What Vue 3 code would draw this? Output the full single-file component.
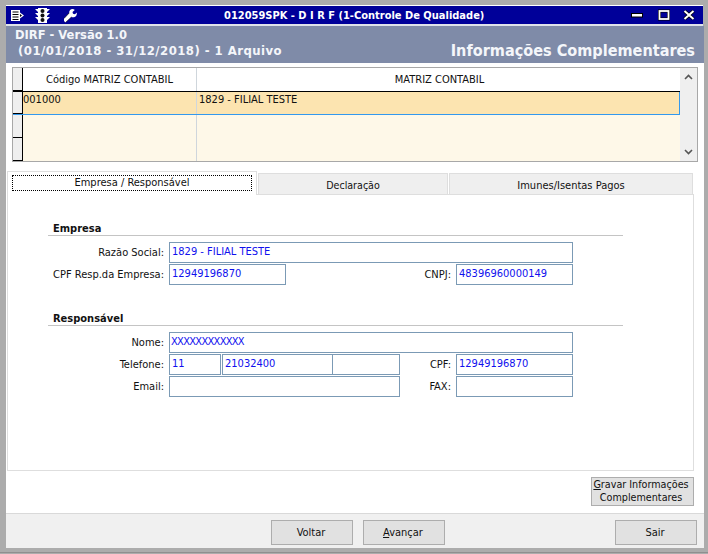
<script setup>
const rows = [
  { id: 1, code: '001000', name: '1829 - FILIAL TESTE', selected: true },
  { id: 2, code: '', name: '', selected: false },
  { id: 3, code: '', name: '', selected: false },
]
</script>

<template>
  <div class="window">
    <div class="titlebar">
      <div class="tools">
        <svg width="13" height="11" viewBox="0 0 13 11"><path d="M0 0h9v2.500l4 3-4 3V11H0z" fill="#fff"/><path d="M1.500 2h6M1.500 4.500h6M1.500 7h6M1.500 9.500h6" stroke="#000" stroke-width="1"/><path d="M9 4v3l2-1.500z" fill="#000"/></svg>
        <svg width="15" height="15" viewBox="0 0 15 15"><path d="M0 1h3V0h9v1h3l-3 3v1h3l-3 3v1h3l-3 3v3H3v-3L0 9h3V8L0 5h3V4z" fill="#fff"/><circle cx="7.500" cy="3" r="2" fill="#111"/><circle cx="7.500" cy="7.500" r="2" fill="#111"/><circle cx="7.500" cy="12" r="2" fill="#111"/></svg>
        <svg class="wrench" width="15" height="15" viewBox="0 0 15 15"><path d="M1 13l1.500 1.500 6-5.500c2 .6 4 .1 5-1.800l.6-2.700-2.300 1.800-1.800-.5-.5-1.800L11.800 2C9.500 0 6 1.500 6.200 5L1 10.500z" fill="#fff"/><path d="M1 10.500L6.200 5M2.500 14.500l6-5.500" stroke="#000" stroke-width=".6"/></svg>
      </div>
      <div class="title">012059SPK - D I R F (1-Controle De Qualidade)</div>
      <div class="controls">
        <svg width="12" height="12" viewBox="0 0 12 12"><rect x=".5" y="4.500" width="11" height="3.500" fill="#fff" stroke="#000"/></svg>
        <svg class="ctl-max" width="12" height="12" viewBox="0 0 12 12"><rect x="1.500" y="2" width="9" height="8" fill="none" stroke="#000" stroke-width="3"/><rect x="1.500" y="2" width="9" height="8" fill="none" stroke="#fff" stroke-width="1.800"/></svg>
        <svg class="ctl-close" width="12" height="12" viewBox="0 0 12 12"><path d="M1.500 2l9 8M10.500 2l-9 8" stroke="#000" stroke-width="3.400"/><path d="M1.500 2l9 8M10.500 2l-9 8" stroke="#fff" stroke-width="2"/></svg>
      </div>
    </div>
    <div class="header">
      <div class="info">
        <div class="h-line">DIRF - Versão 1.0</div>
        <div class="h-line second">(01/01/2018 - 31/12/2018) - 1 Arquivo</div>
      </div>
      <div class="page-title">Informações Complementares</div>
    </div>

    <div class="main">
      <div class="grid">
        <div class="grid-body">
          <div class="grid-row head">
            <div class="ind"></div>
            <div class="cell c1 center">Código MATRIZ CONTABIL</div>
            <div class="cell c2 center">MATRIZ CONTABIL</div>
          </div>
          <div v-for="r in rows" :key="r.id" class="grid-row" :class="{ selected: r.selected }">
            <div class="ind"></div>
            <div class="cell c1">{{ r.code }}</div>
            <div class="cell c2">{{ r.name }}</div>
          </div>
        </div>
        <div class="scroll">
          <svg width="9" height="6" viewBox="0 0 9 6"><path d="M1 5l3.500-3.500L8 5" fill="none" stroke="#555" stroke-width="1.600"/></svg>
          <svg width="9" height="6" viewBox="0 0 9 6"><path d="M1 1l3.500 3.500L8 1" fill="none" stroke="#555" stroke-width="1.600"/></svg>
        </div>
      </div>

      <div class="tabs">
        <div class="tab active"><span class="focus">Empresa / Responsável</span></div>
        <div class="tab t2">Declaração</div>
        <div class="tab t3">Imunes/Isentas Pagos</div>
      </div>
      <div class="panel">
        <section class="sec">
          <h3>Empresa</h3>
          <div class="form">
            <div class="row">
              <label>Razão Social:</label>
              <div class="field wide">1829 - FILIAL TESTE</div>
            </div>
            <div class="row">
              <label>CPF Resp.da Empresa:</label>
              <div class="group"><div class="field short">12949196870</div></div>
              <label class="lab2">CNPJ:</label>
              <div class="field short">48396960000149</div>
            </div>
          </div>
        </section>
        <section class="sec second-sec">
          <h3>Responsável</h3>
          <div class="form">
            <div class="row">
              <label>Nome:</label>
              <div class="field wide nome">XXXXXXXXXXXX</div>
            </div>
            <div class="row">
              <label>Telefone:</label>
              <div class="group">
                <div class="field p1">11</div>
                <div class="field p2">21032400</div>
                <div class="field p3"></div>
              </div>
              <label class="lab2">CPF:</label>
              <div class="field short">12949196870</div>
            </div>
            <div class="row">
              <label>Email:</label>
              <div class="group"><div class="field email"></div></div>
              <label class="lab2">FAX:</label>
              <div class="field short"></div>
            </div>
          </div>
        </section>
      </div>
      <div class="save-row">
        <button class="btn save"><span><u>G</u>ravar Informações</span><span>Complementares</span></button>
      </div>
    </div>

    <div class="footer">
      <button class="btn nav">Voltar</button>
      <button class="btn nav"><span><u>A</u>vançar</span></button>
      <div class="spacer"></div>
      <button class="btn nav sair">Sair</button>
    </div>
    <div class="edge"></div>
  </div>
</template>

<style>
html, body { margin: 0; background: #acacac; }
</style>

<style scoped>
.window {
  width: 708px;
  height: 554px;
  box-sizing: border-box;
  padding: 5px 4px 0 6px;
  background: #acacac;
  display: flex;
  flex-direction: column;
  font-family: "DejaVu Sans Condensed", "DejaVu Sans", sans-serif;
  font-size: 11px;
  color: #111;
  overflow: hidden;
}
.titlebar {
  height: 18px;
  background: #000099;
  color: #fff;
  border-top: 1px solid #fff;
  border-bottom: 2px solid #dfe3ea;
  margin-right: 1px;
  display: flex;
  align-items: center;
  position: relative;
  flex: none;
}
.tools { display: flex; align-items: center; padding-left: 5px; gap: 11px; }
.wrench { margin-left: 2px; }
.title {
  position: absolute;
  left: 218px;
  top: 2px;
  font-weight: 700;
  font-size: 11px;
  line-height: 15px;
  white-space: nowrap;
}
.controls { margin-left: auto; display: flex; padding-right: 8px; margin-bottom: 1px; }
.ctl-max { margin-left: 15px; }
.ctl-close { margin-left: 13px; }
.header {
  height: 37px;
  background: #7f8ba8;
  color: #f4f6fa;
  font-weight: 700;
  display: flex;
  justify-content: space-between;
  flex: none;
  padding: 1px 9px 0 9px;
  box-sizing: border-box;
}
.h-line { font-size: 12.800px; line-height: 16px; white-space: nowrap; }
.second { padding-left: 3px; font-size: 13px; letter-spacing: .45px; }
.page-title { font-size: 16.100px; line-height: 20px; margin-top: 14px; white-space: nowrap; }
.main {
  height: 450px;
  background: #fff;
  flex: none;
  display: flex;
  flex-direction: column;
  padding: 4px 0 0 1px;
  box-sizing: border-box;
}
.grid {
  width: 686px;
  height: 95px;
  margin-left: 5px;
  border: 1px solid #a8a8a8;
  box-sizing: border-box;
  display: flex;
  flex: none;
}
.grid-body { width: 668px; }
.grid-row { display: flex; height: 23px; background: #fef8e8; }
.grid-row.head { background: #fff; height: 24px; border-bottom: 1px solid #000; box-sizing: border-box; }
.grid-row.selected { background: #fce4b0; border-bottom: 1px solid #3399ee; border-right: 1px solid #3399ee; box-sizing: border-box; }
.ind { width: 10px; height: 100%; flex: none; background: #efefef; border-right: 1px solid #000; border-bottom: 1px solid #000; box-sizing: border-box; }
.cell { white-space: nowrap; line-height: 13px; padding-top: 1px; }
.c1 { width: 174px; border-right: 1px solid #cfd6dc; flex: none; box-sizing: border-box; }
.c2 { flex: 1; padding-left: 2px; }
.center { text-align: center; padding-top: 5px; }
.scroll {
  width: 17px;
  background: #efefef;
  display: flex;
  flex-direction: column;
  align-items: center;
  justify-content: space-between;
  padding: 6px 0;
  box-sizing: border-box;
}
.tabs { display: flex; height: 23px; margin-top: 9px; align-items: flex-end; flex: none; }
.tab {
  height: 21px;
  background: #efefef;
  border: 1px solid #dedede;
  border-bottom: none;
  box-sizing: border-box;
  text-align: center;
  line-height: 23px;
  margin-right: 1px;
}
.tab.active { width: 250px; height: 24px; background: #fff; position: relative; padding: 3px 4px; line-height: 13px; margin-bottom: -1px; z-index: 1; }
.focus { display: block; height: 16px; border: 1px dotted #000; box-sizing: border-box; line-height: 13px; }
.t2 { width: 190px; font-size: 10.600px; }
.t3 { width: 244px; }
.panel {
  width: 687px;
  height: 277px;
  border: 1px solid #dedede;
  box-sizing: border-box;
  flex: none;
  padding: 27px 0 0 40px;
}
.sec h3 {
  margin: 0;
  padding-left: 5px;
  font-size: 11px;
  font-weight: 700;
  line-height: 13px;
  height: 13px;
  border-bottom: 1px solid #c4c4c4;
  width: 570px;
}
.second-sec { margin-top: 27px; }
.form { margin-top: 6px; display: flex; flex-direction: column; gap: 1px; }
.row { display: flex; align-items: flex-start; height: 21px; }
label { width: 116px; margin-right: 5px; text-align: right; line-height: 21px; white-space: nowrap; flex: none; }
.lab2 { width: 51px; }
.field {
  height: 21px;
  box-sizing: border-box;
  border: 1px solid #7b9ab5;
  color: #1010ee;
  line-height: 17px;
  padding-left: 2px;
  white-space: nowrap;
  overflow: hidden;
}
.wide { width: 404px; }
.nome { padding-left: 1px; letter-spacing: -.7px; }
.short { width: 117px; }
.group { width: 231px; flex: none; display: flex; }
.email { width: 231px; }
.p1 { width: 52px; margin-right: 1px; }
.p2 { width: 111px; }
.p3 { width: 67px; border-left: none; }
.save-row { display: flex; justify-content: flex-end; padding: 6px 10px 0 0; }
.btn {
  font: inherit;
  color: #111;
  background: #e1e1e1;
  border: 1px solid #adadad;
  padding: 0;
  box-sizing: border-box;
}
.save { width: 103px; height: 29px; display: flex; flex-direction: column; align-items: center; justify-content: flex-start; line-height: 13px; font-size: 10.700px; padding: 0 3px 0 0; }
.footer {
  height: 35px;
  background: #f0f0f0;
  border-top: 1px solid #d9d9d9;
  box-sizing: border-box;
  display: flex;
  gap: 10px;
  align-items: flex-start;
  padding: 6px 7px 0 265px;
  flex: none;
}
.nav { width: 82px; height: 25px; padding-right: 2px; }
.spacer { flex: 1; }
.edge { height: 1px; margin: 4px -6px 0; background: #8f8f8f; flex: none; }
</style>
